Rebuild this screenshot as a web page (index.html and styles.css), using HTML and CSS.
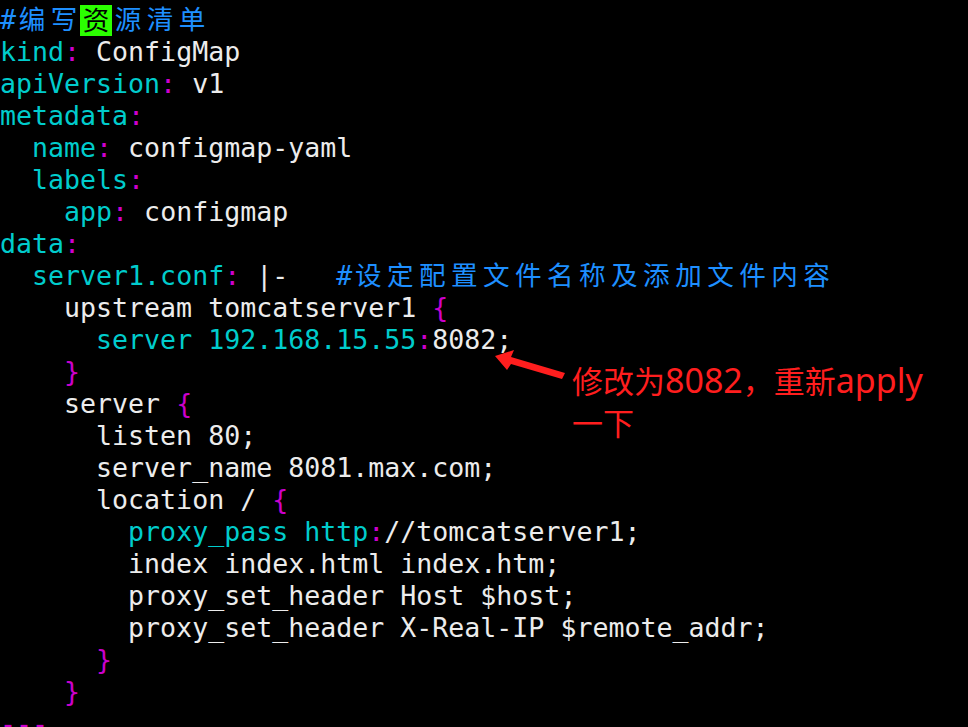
FILE: index.html
```html
<!DOCTYPE html>
<html lang="zh-CN">
<head>
<meta charset="utf-8">
<title>configmap yaml</title>
<link rel="stylesheet" href="styles.css">
</head>
<body>
<main class="screen">
<pre class="term"><span class="c">#<span class="wide">编写</span><span class="hl">资</span><span class="wide">源清单</span></span>
<span class="k">kind</span><span class="p">:</span> ConfigMap
<span class="k">apiVersion</span><span class="p">:</span> v1
<span class="k">metadata</span><span class="p">:</span>
  <span class="k">name</span><span class="p">:</span> configmap-yaml
  <span class="k">labels</span><span class="p">:</span>
    <span class="k">app</span><span class="p">:</span> configmap
<span class="k">data</span><span class="p">:</span>
  <span class="k">server1.conf</span><span class="p">:</span> |-   <span class="c">#<span class="wide">设定配置文件名称及添加文件内容</span></span>
    upstream tomcatserver1 <span class="p">{</span>
      <span class="k">server 192.168.15.55</span><span class="p">:</span>8082;
    <span class="p">}</span>
    server <span class="p">{</span>
      listen 80;
      server_name 8081.max.com;
      location / <span class="p">{</span>
        <span class="k">proxy_pass http</span><span class="p">:</span>//tomcatserver1;
        index index.html index.htm;
        proxy_set_header Host $host;
        proxy_set_header X-Real-IP $remote_addr;
      <span class="p">}</span>
    <span class="p">}</span>
<span class="p">---</span></pre>
<svg class="arrow" width="80" height="45" viewBox="0 0 80 45" aria-hidden="true">
  <polygon points="5,16 24,10 21,17 75,33 72,39 21,24 17,30" fill="#ff1e1e"/>
</svg>
<p class="note">修改为<span class="lat">8082</span>，重新<span class="lat">apply</span><br>一下</p>
</main>
</body>
</html>
```
FILE: styles.css
```css
html, body {
  margin: 0;
  padding: 0;
  background: #000;
  height: 100%;
  overflow: hidden;
}

.screen {
  position: relative;
  width: 968px;
  height: 727px;
  overflow: hidden;
  background: #000;
}

.term {
  margin: 0;
  padding: 4px 0 0 0;
  font-family: "DejaVu Sans Mono", "Noto Sans CJK SC", monospace;
  font-size: 26.6px;
  line-height: 32px;
  color: #ececec;
  white-space: pre;
}

.k { color: #00cccc; }
.p { color: #cc00cc; }
.c { color: #1e8fff; }

.wide {
  letter-spacing: calc(2ch - 1em);
  margin-left: calc(1ch - 0.5em);
  margin-right: calc(0.5em - 1ch);
}

.hl {
  display: inline-block;
  width: 2ch;
  height: 31px;
  line-height: 31px;
  vertical-align: top;
  margin-top: 0.5px;
  text-align: center;
  background: #2bff00;
  color: #000;
}

.arrow {
  position: absolute;
  left: 490px;
  top: 340px;
}

.note {
  position: absolute;
  left: 572px;
  top: 359px;
  margin: 0;
  font-family: "Noto Sans CJK SC", sans-serif;
  font-size: 31px;
  line-height: 42px;
  color: #ff1e1e;
  white-space: nowrap;
}

.lat {
  font-family: "Noto Sans", "Open Sans", sans-serif;
  font-size: 34px;
}
```
